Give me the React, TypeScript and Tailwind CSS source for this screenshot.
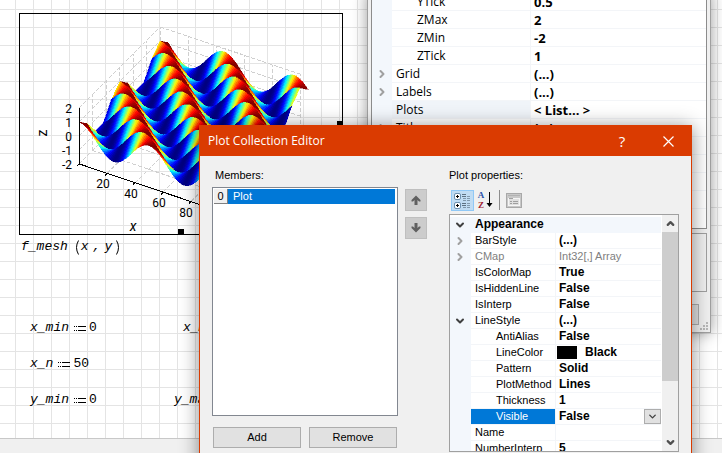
import React from "react";
import { ChevronDown, ChevronRight, ChevronUp } from "lucide-react";

type Row = {
  name: string;
  value?: string;
  level?: number;
  toggle?: "open" | "closed";
  muted?: boolean;
  swatch?: boolean;
  selected?: boolean;
};

const backRows: Row[] = [
  { name: "YTick", value: "0.5", level: 1 },
  { name: "ZMax", value: "2", level: 1 },
  { name: "ZMin", value: "-2", level: 1 },
  { name: "ZTick", value: "1", level: 1 },
  { name: "Grid", value: "(...)", toggle: "closed" },
  { name: "Labels", value: "(...)", toggle: "closed" },
  { name: "Plots", value: "< List... >", selected: true },
  { name: "Title", value: "(...)", toggle: "closed" },
  { name: "", value: "" },
  { name: "", value: "" },
  { name: "", value: "" },
  { name: "", value: "" },
];

const plotRows: Row[] = [
  { name: "BarStyle", value: "(...)", toggle: "closed" },
  { name: "CMap", value: "Int32[,] Array", toggle: "closed", muted: true },
  { name: "IsColorMap", value: "True" },
  { name: "IsHiddenLine", value: "False" },
  { name: "IsInterp", value: "False" },
  { name: "LineStyle", value: "(...)", toggle: "open" },
  { name: "AntiAlias", value: "False", level: 1 },
  { name: "LineColor", value: "Black", level: 1, swatch: true },
  { name: "Pattern", value: "Solid", level: 1 },
  { name: "PlotMethod", value: "Lines", level: 1 },
  { name: "Thickness", value: "1", level: 1 },
  { name: "Visible", value: "False", level: 1, selected: true },
  { name: "Name", value: "" },
  { name: "NumberInterp", value: "5" },
];

// Parallel projection of the unit box, z in data units
function project(u: number, v: number, z: number) {
  return [79 + 140 * u + 81 * v, 136 + 47 * u - 81 * v - 14 * z];
}

function height(u: number, v: number) {
  return Math.cos(4 * Math.PI * (u + v));
}

function jet(z: number) {
  const t = (z + 1) / 2;
  const channel = (center: number) =>
    Math.round(255 * Math.max(0, Math.min(1, 1.5 - Math.abs(4 * t - center))));
  return `rgb(${channel(3)},${channel(2)},${channel(1)})`;
}

function buildSurface() {
  const cells: { points: string; fill: string }[] = [];
  const steps = 100;
  for (let j = 10; j >= 0; j--) {
    for (let i = 0; i < steps; i++) {
      const u0 = i / steps;
      const u1 = (i + 1) / steps;
      const v0 = j / 10;
      const v1 = (j + 1) / 10;
      const points = [
        [u0, v0],
        [u1, v0],
        [u1, v1],
        [u0, v1],
      ]
        .map(([u, v]) => project(u, v, height(u, v)).map((n) => n.toFixed(2)).join(","))
        .join(" ");
      cells.push({ points, fill: jet(height(u0, v0)) });
    }
  }
  return cells;
}

function line(a: number[], b: number[]) {
  return `M${a[0]} ${a[1]}L${b[0]} ${b[1]}`;
}

function buildBox() {
  const parts: string[] = [];
  for (let i = 0; i <= 5; i++) {
    const u = i / 5;
    parts.push(line(project(u, 1, -2), project(u, 1, 2)));
    parts.push(line(project(u, 0, -2), project(u, 1, -2)));
  }
  for (let j = 0; j <= 6; j++) {
    const v = j / 6;
    parts.push(line(project(0, v, -2), project(0, v, 2)));
    parts.push(line(project(0, v, -2), project(1, v, -2)));
  }
  for (let z = -2; z <= 2; z++) {
    parts.push(line(project(0, 0, z), project(0, 1, z)));
    parts.push(line(project(0, 1, z), project(1, 1, z)));
  }
  return parts.join("");
}

const surface = buildSurface();
const box = buildBox();

function SurfacePlot() {
  return (
    <svg
      className="absolute left-0 top-0 font-['Roboto','Noto_Sans',sans-serif]"
      width="360"
      height="250"
      fontSize="12"
      role="img"
      aria-label="Surface plot of f_mesh"
    >
      <path d={box} stroke="#cfcfcf" strokeDasharray="4 2" fill="none" shapeRendering="crispEdges" />
      <g shapeRendering="crispEdges">
        {surface.map((cell, i) => (
          <polygon key={i} points={cell.points} fill={cell.fill} stroke={cell.fill} strokeWidth="0.4" />
        ))}
      </g>
      <path
        d="M79.5 108V164L219 211M79 164l-2 2M107 173l-2 3M135 182l-2 3M163 192l-2 3M191 201l-2 3"
        stroke="#000"
        fill="none"
        shapeRendering="crispEdges"
      />
      <g textAnchor="end">
        <text x="72" y="113">2</text>
        <text x="72" y="127">1</text>
        <text x="72" y="141">0</text>
        <text x="72" y="155">-1</text>
        <text x="72" y="169">-2</text>
      </g>
      <g textAnchor="middle">
        <text x="103" y="188">20</text>
        <text x="131" y="198">40</text>
        <text x="159" y="207">60</text>
        <text x="186" y="217">80</text>
        <text x="133" y="231" fontStyle="italic" fontSize="14">x</text>
        <text transform="translate(47 133) rotate(-90)" fontSize="14">z</text>
      </g>
      <rect x="19.5" y="13.5" width="323" height="221" fill="none" stroke="#000" />
      <rect x="337" y="121" width="6" height="6" />
      <rect x="178" y="229" width="6" height="6" />
    </svg>
  );
}

function Formula({ name, value, className }: { name: string; value: string; className: string }) {
  return (
    <p className={`absolute flex items-center whitespace-pre leading-4 ${className}`}>
      <i>{name}</i>
      <svg className="ml-1 mr-0.5" width="14" height="8" shapeRendering="crispEdges" aria-hidden="true">
        <path d="M1 2h1v1h-1zM3 2h1v1h-1zM1 6h1v1h-1zM3 6h1v1h-1zM5 2h8v1h-8zM5 6h8v1h-8z" />
      </svg>
      <span>{value}</span>
    </p>
  );
}

function Toggle({ state, name }: { state?: "open" | "closed"; name: string }) {
  if (!state) return null;
  return (
    <button type="button" aria-label={`Expand ${name}`} className="ml-1 block">
      {state === "open" ? (
        <ChevronDown size={12} strokeWidth={4} className="text-[#404040]" />
      ) : (
        <ChevronRight size={12} strokeWidth={4} className="text-[#a0a0a0]" />
      )}
    </button>
  );
}

function BackWindow() {
  return (
    <section className="absolute -top-2 left-[367px] h-[341px] w-[344px] border border-[#a0a0a0] bg-[#f0f0f0] px-[3px] shadow-[0_0_14px_rgba(0,0,0,0.4)]">
      <div className="h-[236px] overflow-hidden border border-t-0 border-[#8c8c8c] bg-white">
        <table className="w-full table-fixed border-separate border-spacing-0 font-['Open_Sans','Noto_Sans',sans-serif] text-[12px] leading-4">
          <colgroup>
            <col className="w-5" />
            <col className="w-[139px]" />
            <col />
          </colgroup>
          <tbody>
            {backRows.map((row, i) => (
              <tr key={i} className="h-[18px]">
                <td className="bg-[#f3f7fc] p-0">
                  <Toggle state={row.toggle} name={row.name} />
                </td>
                <td
                  className={`border-b border-r border-[#f3f5f8] py-0 pr-0 ${row.level ? "pl-[25px]" : "pl-1"} ${
                    row.selected ? "bg-[#f0f4f9]" : ""
                  }`}
                >
                  {row.name}
                </td>
                <td className="border-b border-[#f3f5f8] py-0 pl-[3px] pr-0 text-[13px] font-bold">{row.value}</td>
              </tr>
            ))}
          </tbody>
        </table>
      </div>
      <div className="mt-1 h-[59px] border border-[#a0a0a0]" />
      <div className="mt-3 flex justify-end pr-2">
        <button type="button" aria-label="Close" className="h-[21px] w-[75px] border border-[#adadad] bg-[#e1e1e1]" />
      </div>
      <svg className="absolute bottom-0.5 right-0.5" width="8" height="8" fill="#b8b8b8" aria-hidden="true">
        <path d="M6 0h2v2h-2zM3 3h2v2h-2zM6 3h2v2h-2zM0 6h2v2h-2zM3 6h2v2h-2zM6 6h2v2h-2z" />
      </svg>
    </section>
  );
}

function ArrowButton({ down }: { down?: boolean }) {
  return (
    <button
      type="button"
      aria-label={down ? "Move down" : "Move up"}
      className="flex h-[22px] w-[22px] items-center justify-center border border-[#bfbfbf] bg-[#cccccc]"
    >
      <svg width="10" height="10" viewBox="0 0 10 10" fill="#606060" className={down ? "rotate-180" : ""}>
        <path d="M5 0.5L9.5 5V6.5H8L6.5 5V10H3.5V5L2 6.5H0.5V5z" />
      </svg>
    </button>
  );
}

function Members() {
  return (
    <div className="w-[186px]">
      <p id="members" className="mb-1 pl-[3px] leading-4">
        Members:
      </p>
      <ul role="listbox" aria-labelledby="members" className="h-[229px] border border-[#828790] bg-white p-px">
        <li role="option" aria-selected="true" className="flex h-[15px] leading-[14px]">
          <span className="w-3.5 border-b border-r border-[#808080] bg-[#f0f0f0] text-center">0</span>
          <span className="mr-px flex-1 bg-[#0078d7] pl-[5px] text-white">Plot</span>
        </li>
      </ul>
      <div className="mt-[11px] flex gap-2 px-px">
        <button type="button" className="h-[21px] flex-1 border border-[#adadad] bg-[#e1e1e1]">
          Add
        </button>
        <button type="button" className="h-[21px] flex-1 border border-[#adadad] bg-[#e1e1e1]">
          Remove
        </button>
      </div>
    </div>
  );
}

function Toolbar() {
  return (
    <div className="mb-[3px] flex h-[22px] items-center pl-0.5">
      <button
        type="button"
        aria-label="Categorized"
        className="flex h-[21px] w-[23px] items-center justify-center border border-[#90c8f6] bg-[#c0dcf3]"
      >
        <svg width="17" height="17" viewBox="0 0 17 17" fill="none">
          <rect x="0.5" y="1.5" width="6" height="6" rx="1.5" fill="#fff" stroke="#6b8fae" />
          <rect x="0.5" y="10.5" width="6" height="6" rx="1.5" fill="#fff" stroke="#6b8fae" />
          <path d="M2 4.5h3M3.5 3v3M2 13.5h3M3.5 12v3" stroke="#000" />
          <path d="M8 2.5h4M8 4.5h4M8 11.5h4M8 13.5h4" stroke="#5d7182" />
          <path d="M9 6.5h3M13 4.5h3M13 6.5h3M9 8.5h3M13 8.5h3M9 15.5h3M13 13.5h3M13 15.5h3M13 11.5h3" stroke="#8098ac" />
        </svg>
      </button>
      <button
        type="button"
        aria-label="Alphabetical"
        className="flex h-[21px] w-[23px] items-center justify-center font-['Liberation_Serif',serif] text-[9px] font-bold leading-[10px]"
      >
        <span className="flex flex-col">
          <span className="text-[#2a4fa8]">A</span>
          <span className="text-[#a01c32]">Z</span>
        </span>
        <svg width="7" height="16" viewBox="0 0 7 16" className="ml-0.5">
          <path d="M3 0h1v11h2.5L3.5 15L0.5 11H3z" />
        </svg>
      </button>
      <span className="ml-0.5 h-5 w-px bg-[#8d8d8d]" />
      <button type="button" disabled aria-label="Property pages" className="ml-1.5">
        <svg width="16" height="15" viewBox="0 0 16 15" fill="none">
          <rect x="0.5" y="0.5" width="15" height="14" fill="#c8c8c8" stroke="#a8a8a8" />
          <path d="M2 2.5h12" stroke="#b2b2b2" />
          <rect x="2.5" y="5.5" width="11" height="7" fill="#e0e0e0" stroke="#f5f5f5" />
          <path d="M4 8.5h2M7 8.5h5M4 10.5h2M7 10.5h5M3 5.5h4" stroke="#a0a0a0" />
        </svg>
      </button>
    </div>
  );
}

function PropertyValue({ row }: { row: Row }) {
  if (row.swatch) {
    return (
      <span className="flex items-center">
        <span className="-ml-0.5 mr-2 h-[13px] w-5 bg-black" />
        {row.value}
      </span>
    );
  }
  if (row.selected) {
    return (
      <span className="relative flex">
        <select
          aria-label={row.name}
          defaultValue={row.value}
          className="h-[15px] w-full appearance-none font-bold leading-[15px] outline-none"
        >
          <option>True</option>
          <option>False</option>
        </select>
        <span className="pointer-events-none absolute right-0 top-0 flex h-[15px] w-[17px] items-center justify-center border border-[#adadad] bg-[#e1e1e1]">
          <ChevronDown size={11} strokeWidth={3} className="text-[#404040]" />
        </span>
      </span>
    );
  }
  return <>{row.value}</>;
}

function PropertyGrid() {
  return (
    <div className="flex h-[238px] border border-[#a0a0a0] bg-white">
      <div className="flex-1 overflow-hidden pr-px pt-0.5">
        <table className="w-full table-fixed border-separate border-spacing-0 leading-[15px]">
          <colgroup>
            <col className="w-[21px]" />
            <col className="w-[85px]" />
            <col />
          </colgroup>
          <thead>
            <tr className="h-4 bg-[#f3f7fc] text-left">
              <td className="p-0">
                <Toggle state="open" name="Appearance" />
              </td>
              <th colSpan={2} className="border-b border-[#f3f7fc] py-0 pl-1 pr-0 text-[12px] font-bold">
                Appearance
              </th>
            </tr>
          </thead>
          <tbody>
            {plotRows.map((row) => (
              <tr key={row.name} className={`h-4 ${row.muted ? "text-[#808080]" : ""}`}>
                <td className="bg-[#f3f7fc] p-0">
                  <Toggle state={row.toggle} name={row.name} />
                </td>
                <td
                  className={`border-b border-r border-[#f3f5f8] py-0 pr-0 ${row.level ? "pl-[25px]" : "pl-1"} ${
                    row.selected ? "bg-[#0078d7] text-white" : ""
                  }`}
                >
                  {row.name}
                </td>
                <td
                  className={`border-b border-[#f3f5f8] py-0 pl-[3px] pr-0 ${row.muted ? "" : "text-[12px] font-bold"}`}
                >
                  <PropertyValue row={row} />
                </td>
              </tr>
            ))}
          </tbody>
        </table>
      </div>
      <div className="flex w-4 flex-col items-center bg-[#f0f0f0] text-[#505050]">
        <button type="button" aria-label="Scroll up" className="flex h-[17px] items-center">
          <ChevronUp size={11} strokeWidth={5} />
        </button>
        <span className="h-[149px] w-full bg-[#cdcdcd]" />
        <button type="button" aria-label="Scroll down" className="mt-auto flex h-[17px] items-center">
          <ChevronDown size={11} strokeWidth={5} />
        </button>
      </div>
    </div>
  );
}

function PlotCollectionEditor() {
  return (
    <section
      aria-label="Plot Collection Editor"
      className="absolute left-[199px] top-[125px] h-[360px] w-[493px] border border-[#da3b01] bg-[#f0f0f0] font-['Liberation_Sans',Arial,sans-serif] text-[11px] shadow-[0_2px_18px_rgba(0,0,0,0.45)]"
    >
      <header className="flex h-[30px] items-center bg-[#da3b01] pl-2 font-['Open_Sans','Noto_Sans',sans-serif] text-[12px] text-white">
        <h1 className="flex-1">Plot Collection Editor</h1>
        <button type="button" aria-label="Help" className="w-[46px] text-[15px]">
          ?
        </button>
        <button type="button" aria-label="Close" className="flex w-[46px] justify-center">
          <svg width="11" height="11" viewBox="0 0 11 11" stroke="#fff" strokeWidth="1.2">
            <path d="M0.5 0.5L10.5 10.5M10.5 0.5L0.5 10.5" />
          </svg>
        </button>
      </header>
      <div className="flex px-3 pt-[11px]">
        <Members />
        <div className="ml-[7px] flex flex-col gap-1.5 pt-[22px]">
          <ArrowButton />
          <ArrowButton down />
        </div>
        <div className="ml-[22px] flex-1">
          <p className="mb-1.5 leading-4">Plot properties:</p>
          <Toolbar />
          <PropertyGrid />
        </div>
      </div>
    </section>
  );
}

export default function App() {
  return (
    <main className="relative flex h-screen w-full flex-col overflow-hidden bg-white text-black">
      {/* worksheet canvas */}
      <div className="relative flex-1 bg-[linear-gradient(to_right,#e4e4e4_1px,transparent_1px),linear-gradient(to_bottom,#e4e4e4_1px,transparent_1px)] bg-[size:18px_18px] bg-[position:15px_9px] font-['Liberation_Mono',monospace] text-[13px]">
        <SurfacePlot />
        <p className="absolute left-[21px] top-[239px] flex items-center whitespace-pre italic leading-4">
          f_mesh
          <svg className="ml-[7px]" width="4" height="15" fill="none" stroke="#000" aria-hidden="true">
            <path d="M3.5 0.5Q-0.5 7.5 3.5 14.5" />
          </svg>
          <span className="ml-0.5">x</span>
          <span className="ml-1">,</span>
          <span className="ml-1">y</span>
          <svg className="ml-1" width="4" height="15" fill="none" stroke="#000" aria-hidden="true">
            <path d="M0.5 0.5Q4.5 7.5 0.5 14.5" />
          </svg>
        </p>
        <Formula name="x_min" value="0" className="left-[30px] top-[320px]" />
        <Formula name="x_n" value="50" className="left-[30px] top-[356px]" />
        <Formula name="y_min" value="0" className="left-[30px] top-[392px]" />
        <Formula name="x_max" value="1" className="left-[183px] top-[320px]" />
        <Formula name="y_max" value="1" className="left-[174px] top-[392px]" />
      </div>
      <footer className="h-[15px] border-t border-[#c8c8c8] bg-[#f0f0f0]" />
      <BackWindow />
      <PlotCollectionEditor />
    </main>
  );
}
